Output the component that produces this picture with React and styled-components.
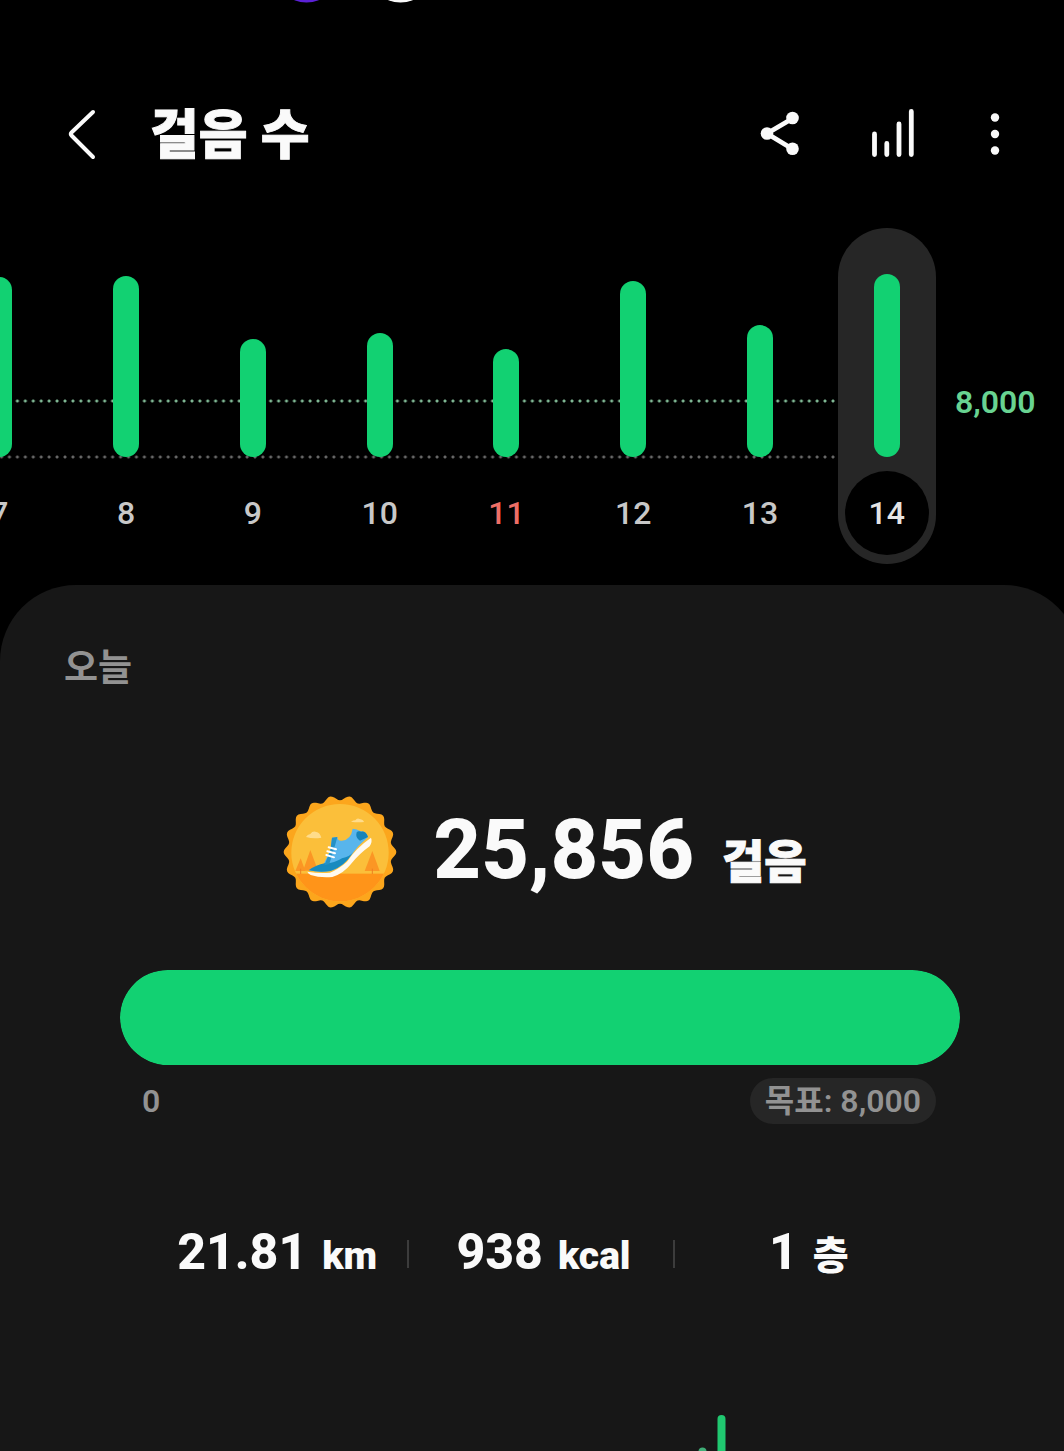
import React, { useState } from 'react'
import styled, { createGlobalStyle, ThemeProvider } from 'styled-components'

const theme = {
  colors: {
    green: '#12d172',
    goal: '#68d391',
    panel: '#171717',
    raised: '#262626',
    white: '#fafafa',
    label: '#c8c8c8',
    muted: '#929292',
    sunday: '#ee6e66',
  },
  font: "Roboto, 'Noto Sans CJK KR', sans-serif",
}

const GlobalStyle = createGlobalStyle`
  * {
    box-sizing: border-box;
  }
  body {
    margin: 0;
    background: #000;
  }
  button {
    padding: 0;
    border: 0;
    background: none;
    color: inherit;
    font: inherit;
    cursor: pointer;
  }
  svg {
    display: block;
  }
`

const Viewport = styled.div`
  min-height: 100vh;
  overflow: hidden;
  background: #000;
  color: ${props => props.theme.colors.white};
  font-family: ${props => props.theme.font};
`

const Screen = styled.div`
  display: flex;
  flex-direction: column;
  min-height: 100vh;
  margin-right: -16px;
`

const StatusBar = styled.div`
  height: 4px;
  padding-left: 294px;
`

const Header = styled.header`
  display: flex;
  align-items: center;
  height: 64px;
  margin-top: 98px;
  padding: 0 80px 0 68px;
`

const IconButton = styled.button`
  display: flex;
  align-items: center;
  height: 64px;
`

const Title = styled.h1`
  flex: 1;
  margin: 0 0 0 52px;
  padding-top: 4px;
  font-size: 53px;
  line-height: 64px;
  font-weight: 900;
  -webkit-text-stroke: 1px;
`

const Actions = styled.div`
  display: flex;
  gap: 72px;
`

const Chart = styled.section`
  display: flex;
  height: 336px;
  margin: 62px 0 21px -64px;
`

const Days = styled.ol`
  display: flex;
  flex: 1;
  margin: 0;
  padding: 0;
  list-style: none;
`

const Day = styled.li`
  position: relative;
  display: flex;
  flex: 1;
  justify-content: center;

  &::before {
    content: '';
    position: absolute;
    top: 171px;
    left: 0;
    right: ${props => (props.$selected ? '50%' : '0')};
    height: 60px;
    background-image: radial-gradient(circle at 2px 2px, #7fb894 1px, transparent 2px),
      radial-gradient(circle at 2px 2px, #686868 1px, transparent 2px);
    background-size: 8px 4px;
    background-position: 0 0, 0 56px;
    background-repeat: round no-repeat;
  }
`

const DayButton = styled.button`
  position: relative;
  display: flex;
  flex-direction: column;
  align-items: center;
  justify-content: flex-end;
  gap: 14px;
  width: 98px;
  padding-bottom: 9px;
  border-radius: 49px;
  background: ${props => (props.$selected ? props.theme.colors.raised : 'none')};
`

const Bar = styled.span`
  width: 26px;
  border-radius: 13px;
  background: ${props => props.theme.colors.green};
`

const DayLabel = styled.span`
  width: 84px;
  height: 84px;
  border-radius: 50%;
  background: ${props => (props.$selected ? '#000' : 'none')};
  color: ${props =>
    props.$sunday
      ? props.theme.colors.sunday
      : props.$selected
        ? '#e4e4e4'
        : props.theme.colors.label};
  font-size: 32px;
  line-height: 84px;
  font-weight: 500;
`

const GoalMark = styled.div`
  width: 130px;
  padding: 155px 0 0 5px;
  color: ${props => props.theme.colors.goal};
  font-size: 32px;
  line-height: 38px;
  font-weight: 600;
`

const Panel = styled.main`
  display: flex;
  flex: 1;
  flex-direction: column;
  border-radius: 76px 76px 0 0;
  background: ${props => props.theme.colors.panel};
`

const PanelTitle = styled.h2`
  margin: 62px 64px 0;
  color: ${props => props.theme.colors.muted};
  font-size: 37px;
  line-height: 44px;
  font-weight: 700;
`

const Summary = styled.div`
  display: flex;
  align-items: center;
  justify-content: center;
  gap: 36px;
  height: 112px;
  margin-top: 105px;
  padding-left: 10px;
`

const Steps = styled.p`
  margin: 0;
  padding-top: 8px;
  font-size: 83px;
  line-height: 100px;
  font-weight: 800;
`

const StepsUnit = styled.span`
  margin-left: 28px;
  font-size: 46px;
  font-weight: 900;
  -webkit-text-stroke: 1px;
`

const Progress = styled.div`
  height: 95px;
  margin: 62px 120px 0;
  border-radius: 48px;
  background: ${props => props.theme.colors.raised};
  overflow: hidden;
`

const ProgressFill = styled.div`
  height: 100%;
  border-radius: 48px;
  background: ${props => props.theme.colors.green};
`

const Scale = styled.div`
  display: flex;
  justify-content: space-between;
  margin: 13px 144px 0 142px;
  color: ${props => props.theme.colors.muted};
  font-size: 32px;
  line-height: 46px;
  font-weight: 600;
`

const GoalPill = styled.span`
  height: 46px;
  padding: 0 15px;
  border-radius: 23px;
  background: ${props => props.theme.colors.raised};
`

const Stats = styled.ul`
  display: flex;
  margin: 98px 142px 0;
  padding: 0;
  list-style: none;
`

const Stat = styled.li`
  display: flex;
  flex: 1;
  align-items: center;
  font-size: 50px;
  line-height: 60px;
  font-weight: 800;

  & + &::before {
    content: '';
    width: 2px;
    height: 28px;
    background: #3c3c3c;
  }
`

const StatText = styled.span`
  flex: 1;
  padding-left: 5px;
  text-align: center;
`

const StatUnit = styled.span`
  margin-left: 15px;
  font-size: 39px;
  font-weight: 900;
`

const HourlyChart = styled.div`
  display: flex;
  justify-content: center;
  margin-top: 129px;
`

const days = [
  { day: 7, height: 180 },
  { day: 8, height: 181 },
  { day: 9, height: 118 },
  { day: 10, height: 124 },
  { day: 11, height: 108, sunday: true },
  { day: 12, height: 176 },
  { day: 13, height: 132 },
  { day: 14, height: 183 },
]

const stats = [
  { value: '21.81', unit: 'km' },
  { value: '938', unit: 'kcal' },
  { value: '1', unit: '층' },
]

const BackIcon = () => (
  <svg width="30" height="52" viewBox="0 0 30 52" fill="none" stroke="#fafafa" strokeWidth="4" strokeLinecap="round" strokeLinejoin="round">
    <path d="M25 4L3.500 24.500Q2 26 3.500 27.500L25 49" />
  </svg>
)

const ShareIcon = () => (
  <svg width="40" height="46" viewBox="0 0 40 46" fill="#fafafa" stroke="#fafafa">
    <path d="M32.500 7.500L7 22.500L32.500 38" fill="none" strokeWidth="4.800" />
    <circle cx="32.500" cy="7" r="6.300" stroke="none" />
    <circle cx="7" cy="22.500" r="6.300" stroke="none" />
    <circle cx="32.500" cy="37.800" r="6.300" stroke="none" />
  </svg>
)

const BarsIcon = () => (
  <svg width="46" height="50" viewBox="0 0 46 50" stroke="#fafafa" strokeWidth="4.800" strokeLinecap="round">
    <path d="M2.500 25V45.500M14.800 34.500V45.500M27 15V45.500M39.300 2.500V45.500" />
  </svg>
)

const MoreIcon = () => (
  <svg width="10" height="44" viewBox="0 0 10 44" fill="#fafafa">
    <circle cx="5" cy="5.500" r="4.200" />
    <circle cx="5" cy="22" r="4.200" />
    <circle cx="5" cy="38.500" r="4.200" />
  </svg>
)

// wavy outline of the badge, 18 teeth round the centre
const badgeEdge = () => {
  const points = []
  for (let deg = 0; deg < 360; deg += 2) {
    const a = (deg * Math.PI) / 180
    const r = 162 - 7 * Math.cos(18 * a)
    points.push(`${(210 + r * Math.sin(a)).toFixed(1)} ${(200 - r * Math.cos(a)).toFixed(1)}`)
  }
  return `M${points.join('L')}Z`
}

const Badge = () => (
  <svg width="114" height="114" viewBox="39 29 342 342" role="img" aria-label="걸음 배지">
    <clipPath id="face">
      <circle cx="210" cy="202" r="146" />
    </clipPath>
    <path d={badgeEdge()} fill="#fca61c" strokeLinejoin="round" />
    <g clipPath="url(#face)">
      <rect x="60" y="50" width="300" height="300" fill="#fbbf3a" />
      <rect x="60" y="265" width="300" height="90" fill="#ff9419" />
      <path d="M108 155Q112 147 121 146Q128 136 139 140Q149 141 154 157Q130 161 108 155Z" fill="#ffdc8b" />
      <path d="M243 109Q250 105 256 105Q261 97 269 101Q280 103 282 110Q262 112 243 109Z" fill="#ffdc8b" />
      <path d="M92 219L106 257H76Z" fill="#fb9624" />
      <path d="M121 194L139 242L116 256H99Z" fill="#fb9624" />
      <path d="M307 197L329 257H284Z" fill="#fb9624" />
      <path d="M92 250V266M307 250V266" stroke="#ed8022" strokeWidth="3" />
    </g>
    <path d="M112 259Q150 265 180 262Q208 250 231 229Q258 188 303 157Q308 168 299 183Q268 205 243 236Q220 265 187 275Q149 278 122 269Q114 265 112 259Z" fill="#fffaf0" />
    <path d="M116 255Q139 243 160 238L181 195L186 157L202 155Q202 167 215 166Q243 164 248 130Q260 130 272 138Q288 137 294 155Q264 180 242 211Q218 246 181 257Q148 262 116 255Z" fill="#58b5ec" />
    <path d="M116 255Q139 238 164 234Q191 235 216 219Q239 214 250 200Q224 243 182 257Q149 262 116 255Z" fill="#178abf" />
    <path d="M260 141Q265 135 274 139Q288 137 294 155L270 166Q255 158 260 141Z" fill="#1683b8" />
    <path d="M186 157L202 155L198 170L192 190L178 236L163 240L181 196Z" fill="#2591c6" />
    <path d="M176 186L198 192M172 198L195 204M169 209L192 216" stroke="#fff" strokeWidth="6" strokeLinecap="round" />
  </svg>
)

const App = () => {
  const [selected, setSelected] = useState(14)

  return (
    <ThemeProvider theme={theme}>
      <GlobalStyle />
      <Viewport>
        <Screen>
          <StatusBar>
            <svg width="120" height="4" viewBox="0 0 120 4">
              <ellipse cx="12.500" cy="-4" rx="16" ry="6.500" fill="#5b21d6" />
              <ellipse cx="106.500" cy="-4" rx="16" ry="6.500" fill="#fafafa" />
            </svg>
          </StatusBar>
          <Header>
            <IconButton aria-label="뒤로">
              <BackIcon />
            </IconButton>
            <Title>걸음 수</Title>
            <Actions>
              <IconButton aria-label="공유">
                <ShareIcon />
              </IconButton>
              <IconButton aria-label="차트">
                <BarsIcon />
              </IconButton>
              <IconButton aria-label="더보기">
                <MoreIcon />
              </IconButton>
            </Actions>
          </Header>
          <Chart>
            <Days>
              {days.map(({ day, height, sunday }) => (
                <Day key={day} $selected={day === selected}>
                  <DayButton
                    $selected={day === selected}
                    aria-pressed={day === selected}
                    onClick={() => setSelected(day)}
                  >
                    <Bar style={{ height }} />
                    <DayLabel $selected={day === selected} $sunday={sunday}>
                      {day}
                    </DayLabel>
                  </DayButton>
                </Day>
              ))}
            </Days>
            <GoalMark>8,000</GoalMark>
          </Chart>
          <Panel>
            <PanelTitle>오늘</PanelTitle>
            <Summary>
              <Badge />
              <Steps>
                25,856
                <StepsUnit>걸음</StepsUnit>
              </Steps>
            </Summary>
            <Progress role="progressbar" aria-valuemin={0} aria-valuemax={8000} aria-valuenow={8000}>
              <ProgressFill style={{ width: '100%' }} />
            </Progress>
            <Scale>
              <span>0</span>
              <GoalPill>목표: 8,000</GoalPill>
            </Scale>
            <Stats>
              {stats.map(({ value, unit }) => (
                <Stat key={unit}>
                  <StatText>
                    {value}
                    <StatUnit>{unit}</StatUnit>
                  </StatText>
                </Stat>
              ))}
            </Stats>
            <HourlyChart>
              <svg width="840" height="36" viewBox="0 0 840 36" strokeWidth="8" strokeLinecap="round">
                <path d="M582.500 36.500V40" stroke="#3fae77" />
                <path d="M601.500 4V44" stroke="#20c870" />
              </svg>
            </HourlyChart>
          </Panel>
        </Screen>
      </Viewport>
    </ThemeProvider>
  )
}

export default App
